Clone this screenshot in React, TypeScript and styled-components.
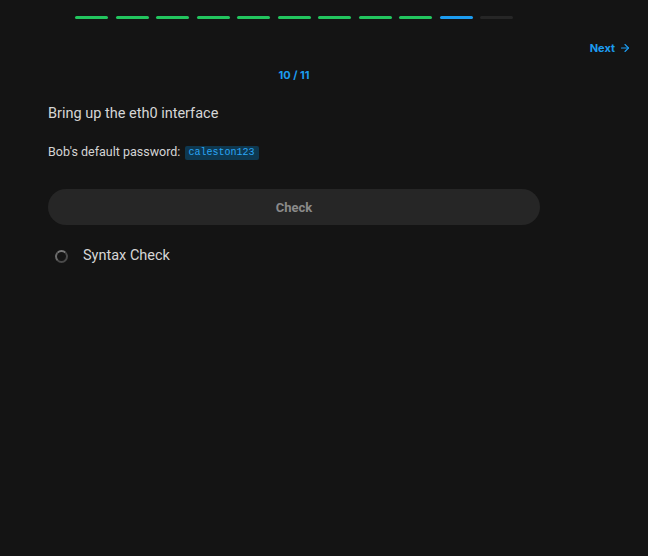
import styled, { createGlobalStyle } from 'styled-components';
import { ArrowRight } from 'lucide-react';

const TOTAL = 11;
const CURRENT = 10;

const GlobalStyle = createGlobalStyle`
    html, body {
        margin: 0;
        background: #141414;
        font-family: Roboto, 'Noto Sans', sans-serif;
        -webkit-font-smoothing: antialiased;
    }
`;

const App: React.FC = () => {
    const steps = Array.from({ length: TOTAL }, (_, i) => i + 1);

    return (
        <Page>
            <GlobalStyle />
            <Column>
                <Progress>
                    { steps.map((step) => (
                        <Segment
                            key={step}
                            $state={step < CURRENT ? 'done' : step === CURRENT ? 'current' : 'todo'}
                        />
                    )) }
                </Progress>
            </Column>
            <TopBar>
                <NextLink href="#">
                    Next
                    <ArrowRight size={12} strokeWidth={2.25} />
                </NextLink>
            </TopBar>
            <Column>
                <Counter>{ CURRENT } / { TOTAL }</Counter>
                <Title>Bring up the eth0 interface</Title>
                <Hint>
                    Bob's default password: <Code>caleston123</Code>
                </Hint>
                <CheckButton type="button">Check</CheckButton>
                <CheckItem>
                    <Spinner />
                    <CheckLabel>Syntax Check</CheckLabel>
                </CheckItem>
            </Column>
        </Page>
    );
};

const Page = styled.div`
    min-height: 556px;
    display: flex;
    flex-direction: column;
    color: #d4d4d4;
`;

const Column = styled.div`
    width: 492px;
    margin-left: 48px;
    display: flex;
    flex-direction: column;
`;

const Progress = styled.div`
    width: 438px;
    margin: 16px auto 0;
    display: flex;
    gap: 7.5px;
`;

const segmentColors = {
    done: '#22c55e',
    current: '#1c9cf0',
    todo: '#262626',
};

const Segment = styled.div<{ $state: keyof typeof segmentColors }>`
    flex: 1;
    height: 3px;
    border-radius: 2px;
    background: ${({ $state }) => segmentColors[$state]};
`;

const TopBar = styled.div`
    display: flex;
    justify-content: flex-end;
    padding-right: 17px;
    margin-top: 22px;
    height: 14px;
`;

const NextLink = styled.a`
    display: flex;
    align-items: center;
    gap: 4px;
    color: #1c9cf0;
    font-family: Inter, Roboto, sans-serif;
    font-size: 11px;
    font-weight: 700;
    line-height: 14px;
    text-decoration: none;
`;

const Counter = styled.div`
    margin-top: 13px;
    text-align: center;
    color: #1c9cf0;
    font-family: Inter, Roboto, sans-serif;
    font-size: 11px;
    font-weight: 700;
    line-height: 14px;
`;

const Title = styled.h2`
    margin: 21px 0 0;
    font-size: 14.5px;
    font-weight: 400;
    line-height: 22px;
    color: #d6d6d6;
`;

const Hint = styled.p`
    margin: 19px 0 0;
    font-size: 12.5px;
    line-height: 16px;
    color: #d4d4d4;
`;

const Code = styled.code`
    display: inline-block;
    margin-left: 1px;
    padding: 0 4px;
    border-radius: 2px;
    background: #0e3850;
    color: #2ba6f5;
    font-family: 'Liberation Mono', monospace;
    font-size: 10px;
    line-height: 14px;
    vertical-align: 1px;
`;

const CheckButton = styled.button`
    margin-top: 29px;
    height: 36px;
    border: none;
    border-radius: 18px;
    background: #262626;
    color: #8a8a8a;
    font-family: inherit;
    font-size: 13px;
    font-weight: 700;
    cursor: default;
`;

const CheckItem = styled.div`
    margin-top: 21px;
    padding-left: 7px;
    display: flex;
    align-items: center;
    gap: 15px;
`;

const Spinner = styled.span`
    box-sizing: border-box;
    width: 13px;
    height: 13px;
    border-radius: 50%;
    border: 2px solid #4a4a4a;
    border-top-color: #7a7a7a;
    border-left-color: #6a6a6a;
`;

const CheckLabel = styled.span`
    font-size: 14.5px;
    line-height: 20px;
    color: #d6d6d6;
`;

App.displayName = 'App';
export default App;
